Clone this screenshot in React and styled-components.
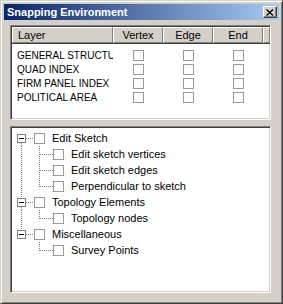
import React from "react";
import styled, { createGlobalStyle } from "styled-components";

const GlobalStyle = createGlobalStyle`
  html, body {
    margin: 0;
    padding: 0;
    background: #d4d0c8;
  }
  * {
    box-sizing: border-box;
  }
`;

const Window = styled.div`
  width: 283px;
  height: 304px;
  display: flex;
  flex-direction: column;
  background: #d4d0c8;
  border: 1px solid;
  border-color: #d4d0c8 #404040 #404040 #d4d0c8;
  box-shadow: inset 1px 1px #ffffff, inset -1px -1px #808080;
  padding: 3px;
  font-family: "Liberation Sans", Arial, sans-serif;
  font-size: 11px;
  color: #000;
`;

const TitleBar = styled.div`
  height: 16px;
  display: flex;
  align-items: center;
  justify-content: space-between;
  padding: 0 2px 0 3px;
  background: linear-gradient(to right, #0a246a, #a6caf0);
  color: #fff;
  font-weight: bold;
  font-size: 11px;
`;

const CloseButton = styled.div`
  width: 14px;
  height: 12px;
  display: flex;
  align-items: center;
  justify-content: center;
  background: #d4d0c8;
  border: 1px solid;
  border-color: #ffffff #404040 #404040 #ffffff;
  box-shadow: inset -1px -1px #808080;
`;

const Content = styled.div`
  flex: 1;
  display: flex;
  flex-direction: column;
  gap: 6px;
  padding: 5px 8px 7px 6px;
`;

const Sunken = styled.div`
  background: #ffffff;
  border: 1px solid;
  border-color: #808080 #ffffff #ffffff #808080;
  box-shadow: inset 1px 1px #404040, inset -1px -1px #d4d0c8;
  padding: 1px;
  overflow: hidden;
  height: ${({ $h }) => $h}px;
  flex: none;
`;

const HeaderRow = styled.div`
  display: flex;
  height: 16px;
  background: #d4d0c8;
`;

const HeaderCell = styled.div`
  width: ${({ $w }) => $w}px;
  flex: ${({ $w }) => ($w ? "none" : 1)};
  height: 16px;
  display: flex;
  align-items: center;
  justify-content: ${({ $center }) => ($center ? "center" : "flex-start")};
  padding-left: ${({ $center }) => ($center ? 0 : 5)}px;
  border-top: 1px solid #ffffff;
  border-left: 1px solid #ffffff;
  border-bottom: 1px solid #808080;
  border-right: 1px solid #808080;
  box-shadow: 1px 0 #404040, 0 1px #404040;
`;

const Rows = styled.div`
  padding-top: 5px;
`;

const LayerRow = styled.div`
  display: flex;
  height: 14px;
  align-items: center;
`;

const LayerName = styled.div`
  width: 101px;
  padding-left: 5px;
  font-size: 10px;
  white-space: nowrap;
  overflow: hidden;
`;

const CheckCell = styled.div`
  width: 50px;
  display: flex;
  justify-content: center;
  padding-left: 1px;
`;

const Check = styled.span`
  display: inline-block;
  width: 11px;
  height: 11px;
  background: #fff;
  border: 1px solid #9a9a9a;
  flex: none;
`;

const Tree = styled.div`
  padding-top: 2px;
  padding-left: 3px;
`;

const TreeRow = styled.div`
  display: flex;
  align-items: center;
  height: 16px;
`;

const Gutter = styled.svg`
  width: 19px;
  height: 16px;
  flex: none;
  display: block;
`;

const TreeLabel = styled.span`
  margin-left: 7px;
  white-space: nowrap;
`;

const layers = ["GENERAL STRUCTURE", "QUAD INDEX", "FIRM PANEL INDEX", "POLITICAL AREA"];

const groups = [
  { name: "Edit Sketch", items: ["Edit sketch vertices", "Edit sketch edges", "Perpendicular to sketch"] },
  { name: "Topology Elements", items: ["Topology nodes"] },
  { name: "Miscellaneous", items: ["Survey Points"] },
];

const dot = { stroke: "#808080", strokeWidth: 1, strokeDasharray: "1 1", shapeRendering: "crispEdges" };

const Expander = ({ first, last }) => (
  <Gutter viewBox="0 0 19 16">
    {!first && <line x1="6.5" y1="0" x2="6.5" y2="4" {...dot} />}
    {!last && <line x1="6.5" y1="13" x2="6.5" y2="16" {...dot} />}
    <line x1="11" y1="8.5" x2="19" y2="8.5" {...dot} />
    <rect x="2.5" y="4.5" width="8" height="8" fill="#fff" stroke="#808080" shapeRendering="crispEdges" />
    <line x1="4" y1="8.5" x2="9" y2="8.5" stroke="#000" shapeRendering="crispEdges" />
  </Gutter>
);

const Pass = ({ on }) => (
  <Gutter viewBox="0 0 19 16">{on && <line x1="6.5" y1="0" x2="6.5" y2="16" {...dot} />}</Gutter>
);

const Elbow = ({ last }) => (
  <Gutter viewBox="0 0 19 16">
    <line x1="5.5" y1="0" x2="5.5" y2={last ? 9 : 16} {...dot} />
    <line x1="6" y1="8.5" x2="19" y2="8.5" {...dot} />
  </Gutter>
);

export default function App() {
  return (
    <>
      <GlobalStyle />
      <Window>
        <TitleBar>
          <span>Snapping Environment</span>
          <CloseButton>
            <svg width="8" height="7" viewBox="0 0 8 7">
              <path d="M0.5 0.5 L7 6.5 M7 0.5 L0.5 6.5" stroke="#000" strokeWidth="1.3" />
            </svg>
          </CloseButton>
        </TitleBar>
        <Content>
          <Sunken $h={95}>
            <HeaderRow>
              <HeaderCell $w={101}>Layer</HeaderCell>
              <HeaderCell $w={50} $center>Vertex</HeaderCell>
              <HeaderCell $w={50} $center>Edge</HeaderCell>
              <HeaderCell $w={50} $center>End</HeaderCell>
              <HeaderCell />
            </HeaderRow>
            <Rows>
              {layers.map((l) => (
                <LayerRow key={l}>
                  <LayerName>{l}</LayerName>
                  <CheckCell><Check /></CheckCell>
                  <CheckCell><Check /></CheckCell>
                  <CheckCell><Check /></CheckCell>
                </LayerRow>
              ))}
            </Rows>
          </Sunken>
          <Sunken $h={167}>
            <Tree>
              {groups.map((g, gi) => {
                const lastGroup = gi === groups.length - 1;
                return (
                  <React.Fragment key={g.name}>
                    <TreeRow>
                      <Expander first={gi === 0} last={lastGroup} />
                      <Check />
                      <TreeLabel>{g.name}</TreeLabel>
                    </TreeRow>
                    {g.items.map((it, ii) => (
                      <TreeRow key={it}>
                        <Pass on={!lastGroup} />
                        <Elbow last={ii === g.items.length - 1} />
                        <Check />
                        <TreeLabel>{it}</TreeLabel>
                      </TreeRow>
                    ))}
                  </React.Fragment>
                );
              })}
            </Tree>
          </Sunken>
        </Content>
      </Window>
    </>
  );
}
